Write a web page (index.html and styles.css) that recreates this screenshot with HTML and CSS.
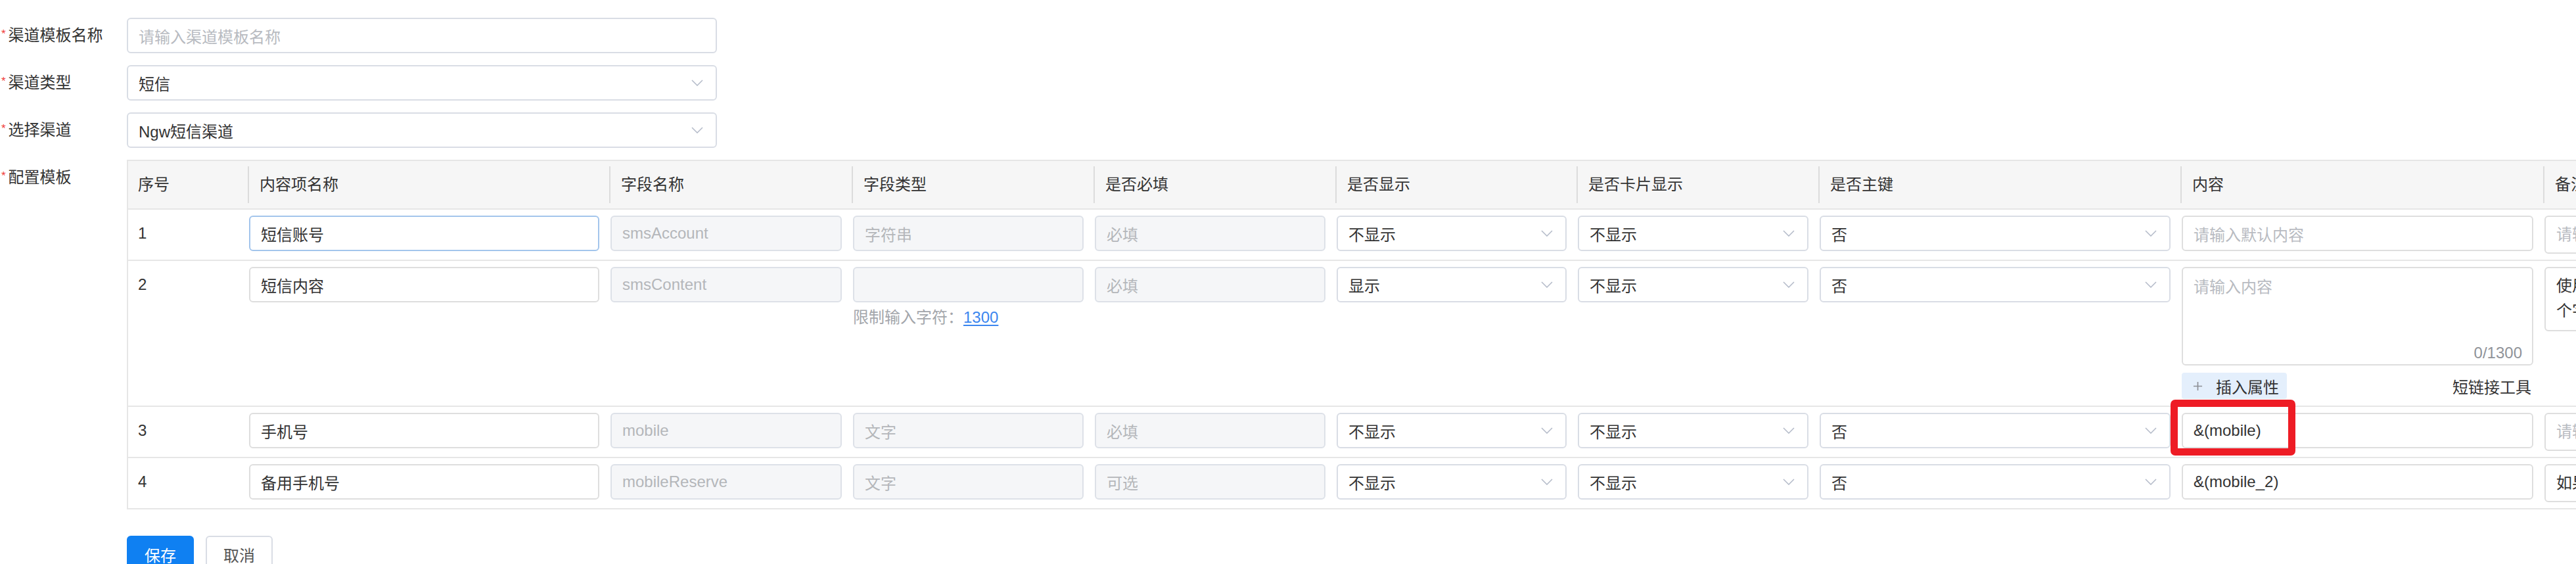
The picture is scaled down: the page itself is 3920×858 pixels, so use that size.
FILE: index.html
```html
<!DOCTYPE html>
<html lang="zh-CN">
<head>
<meta charset="utf-8">
<title>渠道模板</title>
<link rel="stylesheet" href="styles.css">
</head>
<body>
<div class="page">
  <div class="form-item">
    <label class="label"><span class="req">*</span>渠道模板名称</label>
    <div class="control"><div class="inp ph">请输入渠道模板名称</div></div>
  </div>
  <div class="form-item">
    <label class="label"><span class="req">*</span>渠道类型</label>
    <div class="control"><div class="inp sel"><span>短信</span><svg class="arrow" viewBox="0 0 18 10"><polyline points="1,1 9,9 17,1"/></svg></div></div>
  </div>
  <div class="form-item">
    <label class="label"><span class="req">*</span>选择渠道</label>
    <div class="control"><div class="inp sel"><span>Ngw短信渠道</span><svg class="arrow" viewBox="0 0 18 10"><polyline points="1,1 9,9 17,1"/></svg></div></div>
  </div>
  <div class="form-item last">
    <label class="label"><span class="req">*</span>配置模板</label>
    <div class="table">
      <div class="thead">
        <div class="th">序号</div>
        <div class="th">内容项名称</div>
        <div class="th">字段名称</div>
        <div class="th">字段类型</div>
        <div class="th">是否必填</div>
        <div class="th">是否显示</div>
        <div class="th">是否卡片显示</div>
        <div class="th">是否主键</div>
        <div class="th">内容</div>
        <div class="th">备注</div>
      </div>

      <div class="tr">
        <div class="td idx">1</div>
        <div class="td"><div class="inp focus">短信账号</div></div>
        <div class="td"><div class="inp dis">smsAccount</div></div>
        <div class="td"><div class="inp dis">字符串</div></div>
        <div class="td"><div class="inp dis">必填</div></div>
        <div class="td"><div class="inp sel"><span>不显示</span><svg class="arrow" viewBox="0 0 18 10"><polyline points="1,1 9,9 17,1"/></svg></div></div>
        <div class="td"><div class="inp sel"><span>不显示</span><svg class="arrow" viewBox="0 0 18 10"><polyline points="1,1 9,9 17,1"/></svg></div></div>
        <div class="td"><div class="inp sel"><span>否</span><svg class="arrow" viewBox="0 0 18 10"><polyline points="1,1 9,9 17,1"/></svg></div></div>
        <div class="td"><div class="inp txt ph">请输入默认内容</div></div>
        <div class="td"><div class="ta ph">请输入备注</div></div>
      </div>

      <div class="tr tall">
        <div class="td idx">2</div>
        <div class="td"><div class="inp txt">短信内容</div></div>
        <div class="td"><div class="inp dis">smsContent</div></div>
        <div class="td">
          <div class="inp dis"></div>
          <div class="limit">限制输入字符：<a class="num">1300</a></div>
        </div>
        <div class="td"><div class="inp dis">必填</div></div>
        <div class="td"><div class="inp sel"><span>显示</span><svg class="arrow" viewBox="0 0 18 10"><polyline points="1,1 9,9 17,1"/></svg></div></div>
        <div class="td"><div class="inp sel"><span>不显示</span><svg class="arrow" viewBox="0 0 18 10"><polyline points="1,1 9,9 17,1"/></svg></div></div>
        <div class="td"><div class="inp sel"><span>否</span><svg class="arrow" viewBox="0 0 18 10"><polyline points="1,1 9,9 17,1"/></svg></div></div>
        <div class="td">
          <div class="area">
            <div class="area-ph">请输入内容</div>
            <div class="count">0/1300</div>
          </div>
          <div class="tools">
            <div class="insert"><svg class="plus" viewBox="0 0 16 16"><path d="M8 1v14M1 8h14"/></svg><span>插入属性</span></div>
            <div class="link-tool">短链接工具</div>
          </div>
        </div>
        <div class="td"><div class="ta multi">使用该字段发送短信，内容最多1300<br>个字符</div></div>
      </div>

      <div class="tr">
        <div class="td idx">3</div>
        <div class="td"><div class="inp txt">手机号</div></div>
        <div class="td"><div class="inp dis">mobile</div></div>
        <div class="td"><div class="inp dis">文字</div></div>
        <div class="td"><div class="inp dis">必填</div></div>
        <div class="td"><div class="inp sel"><span>不显示</span><svg class="arrow" viewBox="0 0 18 10"><polyline points="1,1 9,9 17,1"/></svg></div></div>
        <div class="td"><div class="inp sel"><span>不显示</span><svg class="arrow" viewBox="0 0 18 10"><polyline points="1,1 9,9 17,1"/></svg></div></div>
        <div class="td"><div class="inp sel"><span>否</span><svg class="arrow" viewBox="0 0 18 10"><polyline points="1,1 9,9 17,1"/></svg></div></div>
        <div class="td"><div class="inp txt">&amp;(mobile)</div><div class="mark"></div></div>
        <div class="td"><div class="ta ph">请输入备注</div></div>
      </div>

      <div class="tr">
        <div class="td idx">4</div>
        <div class="td"><div class="inp txt">备用手机号</div></div>
        <div class="td"><div class="inp dis">mobileReserve</div></div>
        <div class="td"><div class="inp dis">文字</div></div>
        <div class="td"><div class="inp dis">可选</div></div>
        <div class="td"><div class="inp sel"><span>不显示</span><svg class="arrow" viewBox="0 0 18 10"><polyline points="1,1 9,9 17,1"/></svg></div></div>
        <div class="td"><div class="inp sel"><span>不显示</span><svg class="arrow" viewBox="0 0 18 10"><polyline points="1,1 9,9 17,1"/></svg></div></div>
        <div class="td"><div class="inp sel"><span>否</span><svg class="arrow" viewBox="0 0 18 10"><polyline points="1,1 9,9 17,1"/></svg></div></div>
        <div class="td"><div class="inp txt">&amp;(mobile_2)</div></div>
        <div class="td"><div class="ta">如果手机号为空则使用备用手机号</div></div>
      </div>
    </div>
  </div>
  <div class="actions">
    <button class="btn primary">保存</button>
    <button class="btn">取消</button>
  </div>
</div>
</body>
</html>
```

FILE: styles.css
```css
* { box-sizing: border-box; }
html, body { margin: 0; padding: 0; overflow: hidden; background: #fff; }
body {
  font-family: "Liberation Sans", "Noto Sans CJK SC", sans-serif;
  font-size: 24px;
  color: #333;
}
.page { padding-top: 27px; width: 4500px; }

.form-item { display: flex; align-items: flex-start; margin-bottom: 18px; }
.form-item.last { margin-bottom: 40px; }
.label {
  width: 193px; flex: none; padding-left: 2px;
  line-height: 54px; color: #333; white-space: nowrap;
}
.req {
  display: inline-block; width: 10.5px; color: #f03a3a;
  font-size: 17px; line-height: 50px; vertical-align: top;
}
.control { width: 898px; flex: none; }

.inp {
  height: 54px; border: 2px solid #d9dde5; border-radius: 6px;
  padding: 0 16px; display: flex; align-items: center;
  background: #fff; color: #333; white-space: nowrap; overflow: hidden;
}
.inp.txt { border-color: #dedede; }
.inp.focus { border-color: #a3c5ec; }
.ph { color: #b8bbc1 !important; }
.inp.dis { background: #f5f6f8; border-color: #dde1e8; color: #b4b6ba; }
.inp.sel { justify-content: space-between; padding-right: 19px; }
.arrow { width: 18px; height: 10px; flex: none; fill: none; stroke: #b3bac8; stroke-width: 1.5; }

.table {
  flex: none; width: 4237px;
  border-top: 2px solid #e6e6e6; border-left: 2px solid #e6e6e6;
}
.thead, .tr {
  display: grid;
  grid-template-columns: 182px 550px 369px 368px 368px 367px 368px 551px 552px 560px;
  border-bottom: 2px solid #e6e6e6;
}
.thead { height: 74px; background: #f6f6f6; align-items: center; }
.th { position: relative; height: 72px; line-height: 72px; padding-left: 18px; color: #333; white-space: nowrap; }
.th:first-child { padding-left: 15px; }
.th + .th::before {
  content: ""; position: absolute; left: 0; top: 8px; bottom: 8px;
  width: 2px; background: #dcdcdc;
}

.tr { height: 78px; padding-top: 9px; align-items: start; }
.tr.tall { height: 222px; }
.td { padding: 0 15px 0 2px; min-width: 0; position: relative; }
.td.idx { padding-left: 15px; line-height: 54px; color: #333; }

.limit { margin-top: 6px; line-height: 34px; color: #a3a6ab; white-space: nowrap; }
.limit .num { color: #3b86ef; text-decoration: underline; text-underline-offset: 3px; }

.area {
  height: 150px; border: 2px solid #dedede; border-radius: 6px;
  padding: 12px 15px 0 16px; display: flex; flex-direction: column;
}
.area-ph { line-height: 34px; color: #b8bbc1; }
.count { margin-top: auto; align-self: flex-end; line-height: 34px; color: #909399; }
.tools { display: flex; justify-content: space-between; align-items: center; margin-top: 11px; height: 40px; }
.insert {
  width: 160px; height: 40px; border-radius: 4px; background: #e4effc;
  display: flex; align-items: center; padding-left: 17px; gap: 20px; color: #333;
}
.plus { width: 15px; height: 15px; fill: none; stroke: #8d9096; stroke-width: 1.8; }
.link-tool { margin-right: 3px; color: #333; }

.ta {
  height: 58px; border: 2px solid #dedede; border-radius: 6px;
  padding: 8px 16px; line-height: 38px; color: #333; white-space: nowrap; overflow: hidden;
}
.ta.multi { height: 98px; }

.mark {
  position: absolute; left: -15px; top: -20px; width: 190px; height: 85px;
  border: 11px solid #ee1c25; border-radius: 7px; pointer-events: none;
}

.actions { display: flex; gap: 18px; padding-left: 193px; }
.btn {
  width: 102px; height: 56px; border-radius: 6px; border: 2px solid #d9dde5;
  background: #fff; color: #555; font-family: inherit; font-size: 24px; padding: 0;
}
.btn.primary { background: #0f80f2; border-color: #0f80f2; color: #fff; }
```
